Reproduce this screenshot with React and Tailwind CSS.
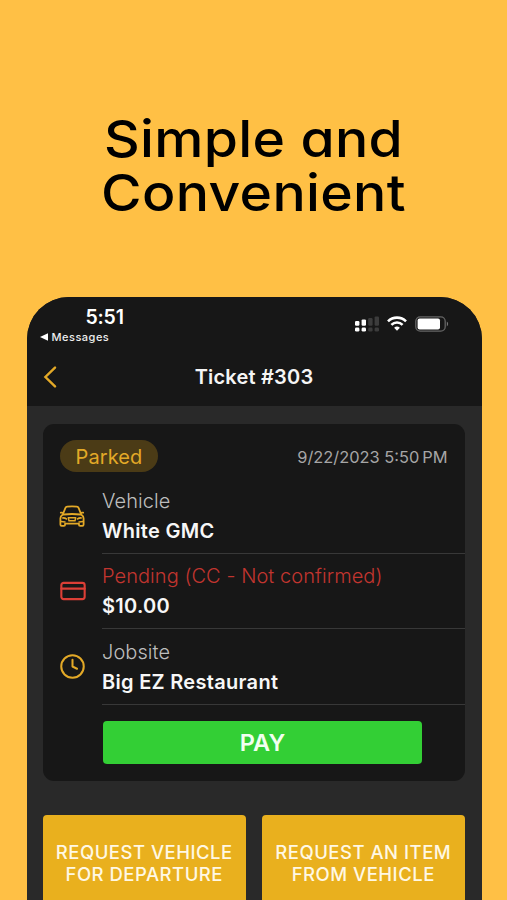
import { Clock, CreditCard } from "lucide-react";

const SignalIcon = () => (
  <svg width="24" height="16" viewBox="0 0 24 16">
    <g fill="#ffffff">
      <rect x="0" y="5" width="4.4" height="4.8" rx="1.2" />
      <rect x="6.6" y="3.4" width="4.4" height="6.4" rx="1.2" />
      <rect x="0" y="11.6" width="4.4" height="4" rx="1.4" />
      <rect x="6.6" y="11.6" width="4.4" height="4" rx="1.4" />
    </g>
    <g fill="#3c3c3c">
      <rect x="13.2" y="2" width="4.4" height="7.8" rx="1.2" />
      <rect x="19.6" y="0.4" width="4.4" height="9.4" rx="1.2" />
      <rect x="13.2" y="11.6" width="4.4" height="4" rx="1.4" />
      <rect x="19.6" y="11.6" width="4.4" height="4" rx="1.4" />
    </g>
  </svg>
);

const WifiIcon = () => (
  <svg width="20" height="15" viewBox="0 0 20 15" fill="none">
    <path d="M1 5.3a12.8 12.8 0 0 1 18 0" stroke="#ffffff" strokeWidth="2.6" />
    <path d="M4.4 8.9a7.9 7.9 0 0 1 11.2 0" stroke="#ffffff" strokeWidth="2.5" />
    <path d="M7.1 11.7a4.3 4.3 0 0 1 5.8 0L10 14.8Z" fill="#ffffff" />
  </svg>
);

const BatteryIcon = () => (
  <svg width="34" height="16" viewBox="0 0 34 16" fill="none">
    <rect x="0.8" y="0.8" width="29.4" height="14.4" rx="4.4" stroke="#666666" strokeWidth="1.3" />
    <rect x="2.6" y="2.6" width="22.4" height="10.8" rx="2" fill="#ffffff" />
    <path d="M31.8 5.6c1.8.8 1.8 4 0 4.8Z" fill="#777777" />
  </svg>
);

const BackIcon = () => (
  <svg width="14" height="22" viewBox="0 0 14 22" fill="none">
    <path d="M12 1.6 2.4 11l9.6 9.4" stroke="#e3a927" strokeWidth="2.4" strokeLinecap="round" />
  </svg>
);

const CarIcon = () => (
  <svg
    width="26"
    height="22"
    viewBox="0 0 26 22"
    fill="none"
    stroke="#e3a927"
    strokeWidth="1.8"
    strokeLinecap="round"
    strokeLinejoin="round"
  >
    <path d="M3.8 9.4 6.3 3.2c.4-.9 1-1.4 1.9-1.5 3.2-.4 6.4-.4 9.6 0 .9.1 1.5.6 1.9 1.5l2.5 6.2" />
    <path d="M3.8 9.4C2.2 10.4 1.4 11.7 1.4 13.5v6c0 .8.5 1.3 1.2 1.3h2.3c.7 0 1.2-.5 1.2-1.3v-.9h13.8v.9c0 .8.5 1.3 1.2 1.3h2.3c.7 0 1.2-.5 1.2-1.3v-6c0-1.8-.8-3.1-2.4-4.1" />
    <path d="M4.6 9.5c5.6-.7 11.2-.7 16.8 0" />
    <path d="M3.2 7.7H1.8M22.8 7.7h1.4" />
    <path d="M4 12.9c1.3 0 2.4.2 3.4 1M22 12.9c-1.3 0-2.4.2-3.4 1" />
    <path d="M9.3 12.7h7.4l-.7 3.1h-6ZM2 16.6l4 .3M24 16.6l-4 .3" strokeWidth="1.5" />
  </svg>
);

const InfoRow = ({ icon, label, value, danger }) => (
  <div className="flex h-[75.6px] items-stretch">
    <div className="flex w-[59px] items-center pl-[16px]">{icon}</div>
    <div className="flex-1 border-b border-[#383838] pt-[9.5px] whitespace-nowrap">
      <div
        className={
          danger
            ? "text-[20px] leading-[26px] font-light tracking-[0.06px] text-[#c2352f]"
            : "text-[20px] leading-[26px] font-light tracking-[0.06px] text-[#bdbdbd]"
        }
      >
        {label}
      </div>
      <div className="mt-[4px] text-[20px] leading-[26px] font-semibold tracking-[0.3px] text-[#f7f7f7]">
        {value}
      </div>
    </div>
  </div>
);

const ActionButton = ({ lines }) => (
  <button className="flex h-[100px] w-[202.5px] flex-col items-center rounded-[4px] bg-[#e9b01e] pt-[26px] text-[18.5px] leading-[22px] font-medium tracking-[0.5px] whitespace-nowrap text-[#fff8e4]">
    {lines.map((line) => (
      <span key={line}>{line}</span>
    ))}
  </button>
);

const StatusBar = () => (
  <div className="flex h-[50px] justify-between">
    <div className="pt-[8px] pl-[13px]">
      <div className="pl-[46px] text-[19.5px] leading-[24px] font-semibold tracking-[-0.2px] text-white">
        5:51
      </div>
      <div className="flex items-center gap-[4px] text-[11px] leading-[16px] font-medium tracking-[0.5px] text-[#eeeeee]">
        <svg width="8" height="8" viewBox="0 0 8 8">
          <path d="M0 4 8 0.3v7.4Z" fill="#ffffff" />
        </svg>
        Messages
      </div>
    </div>
    <div className="flex items-start gap-[8px] pt-[19px] pr-[33px]">
      <SignalIcon />
      <WifiIcon />
      <BatteryIcon />
    </div>
  </div>
);

const App = () => {
  return (
    <div className="h-[900px] w-[507px] overflow-hidden bg-[#ffc045] font-['Inter',sans-serif]">
      <h1 className="h-[297px] scale-x-[1.085] pt-[112px] text-center text-[51px] leading-[54px] font-medium tracking-[0.3px] text-black [font-feature-settings:'cv11']">
        Simple and
        <br />
        Convenient
      </h1>

      <div className="ml-[26.5px] h-[603px] w-[455px] overflow-hidden rounded-t-[42px] bg-[#292929]">
        <div className="h-[109px] bg-[#171717]">
          <StatusBar />
          <div className="flex h-[60px] items-center pl-[16px]">
            <BackIcon />
            <h2 className="flex-1 pr-[30px] text-center text-[20px] font-semibold tracking-[0.2px] text-[#f5f5f5]">
              Ticket #303
            </h2>
          </div>
        </div>

        <div className="pt-[18px] pr-[17px] pl-[16.5px]">
          <div className="h-[357px] rounded-[11px] bg-[#171717]">
            <div className="flex h-[54px] items-start justify-between pt-[16px] pr-[17px] pl-[17px]">
              <span className="flex h-[32px] w-[98px] items-center justify-center rounded-full bg-[#4b3b16] pt-[1px] text-[20px] tracking-[0.1px] text-[#e3a927]">
                Parked
              </span>
              <span className="pt-[5px] text-[16.4px] leading-[24px] text-[#a6a6a6]">
                9/22/2023 5:50&#8239;PM
              </span>
            </div>

            <InfoRow icon={<CarIcon />} label="Vehicle" value="White GMC" />
            <InfoRow
              icon={<CreditCard className="h-[28px] w-[28px] text-[#dc3f36]" strokeWidth={1.8} />}
              label="Pending (CC - Not confirmed)"
              value="$10.00"
              danger
            />
            <InfoRow
              icon={<Clock className="h-[27px] w-[27px] text-[#e3a927]" strokeWidth={1.8} />}
              label="Jobsite"
              value="Big EZ Restaurant"
            />

            <button className="mt-[16px] ml-[60px] flex h-[43px] w-[319px] items-center justify-center rounded-[4px] bg-[#33cf35] text-[23.5px] font-semibold text-[#f2fff0]">
              PAY
            </button>
          </div>

          <div className="mt-[34px] flex justify-between">
            <ActionButton lines={["REQUEST VEHICLE", "FOR DEPARTURE"]} />
            <ActionButton lines={["REQUEST AN ITEM", "FROM VEHICLE"]} />
          </div>
        </div>
      </div>
    </div>
  );
};

export default App;
